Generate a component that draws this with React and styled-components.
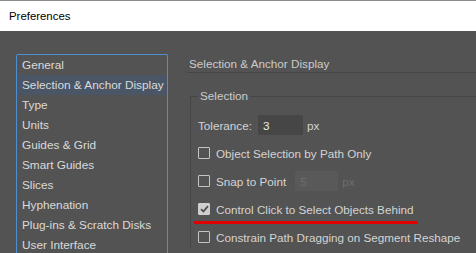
import React from "react";
import styled, { createGlobalStyle } from "styled-components";

const GlobalStyle = createGlobalStyle`
  html, body {
    margin: 0;
    padding: 0;
    background: #535353;
    overflow: hidden;
  }
  body {
    font-family: "Liberation Sans", Arial, sans-serif;
  }
`;

const Window = styled.div`
  width: 476px;
  height: 253px;
  display: flex;
  flex-direction: column;
  overflow: hidden;
`;

const TitleBar = styled.div`
  height: 30px;
  flex: none;
  background: #ffffff;
  border-top: 1px solid #8c8c8c;
  display: flex;
  align-items: center;
  padding-left: 9px;
  font-size: 11.4px;
  color: #000;
`;

const Body = styled.div`
  flex: 1;
  display: flex;
  padding: 23px 0 0 16px;
  background: #535353;
`;

const List = styled.ul`
  list-style: none;
  margin: 0;
  padding: 0;
  width: 150px;
  flex: none;
  border: 1px solid #4e8fcf;
  border-bottom: none;
  border-radius: 2px 2px 0 0;
`;

const Item = styled.li`
  height: 20px;
  line-height: 20px;
  padding-left: 5px;
  font-size: 11.8px;
  color: #dadada;
  white-space: nowrap;
  background: ${(p) => (p.$active ? "#4a5666" : "transparent")};
`;

const Panel = styled.div`
  flex: 1;
  margin-left: 19px;
  min-width: 0;
`;

const Heading = styled.div`
  height: 18px;
  line-height: 19px;
  padding-left: 2px;
  font-size: 11.7px;
  color: #cbcbcb;
  border-bottom: 1px solid #464646;
`;

const Group = styled.fieldset`
  margin: 15px 0 0 3px;
  padding: 10px 0 0 7px;
  border: none;
  border-top: 1px solid #464646;
  border-left: 1px solid #464646;
  display: flex;
  flex-direction: column;
  gap: 6px;
`;

const Legend = styled.legend`
  padding: 0 2px;
  font-size: 11.7px;
  line-height: 16px;
  color: #cbcbcb;
`;

const Row = styled.div`
  position: relative;
  height: 22px;
  display: flex;
  align-items: center;
  font-size: 11.7px;
  color: #d4d4d4;
  white-space: nowrap;

  ${(p) =>
    p.$marked &&
    `
    &::after {
      content: "";
      position: absolute;
      left: -4px;
      top: 23px;
      width: 224px;
      height: 3px;
      border-radius: 1px;
      background: #e00000;
    }
  `}
`;

const Box = styled.span`
  width: 10px;
  height: 10px;
  flex: none;
  margin-right: 6px;
  border: 1px solid ${(p) => (p.$checked ? "#cfcfcf" : "#c4c4c4")};
  background: ${(p) => (p.$checked ? "#cfcfcf" : "transparent")};
  border-radius: 1px;
  display: flex;
  align-items: center;
  justify-content: center;
`;

const Field = styled.span`
  width: ${(p) => p.$w || 45}px;
  height: 20px;
  box-sizing: border-box;
  margin-left: ${(p) => p.$gap || 6}px;
  margin-right: 4px;
  padding-left: 5px;
  border-radius: 2px;
  display: flex;
  align-items: center;
  background: ${(p) => (p.$disabled ? "#595959" : "#464646")};
  color: ${(p) => (p.$disabled ? "#6e6e6e" : "#ececec")};
`;

const Unit = styled.span`
  color: ${(p) => (p.$disabled ? "#6e6e6e" : "#d4d4d4")};
`;

const items = [
  "General",
  "Selection & Anchor Display",
  "Type",
  "Units",
  "Guides & Grid",
  "Smart Guides",
  "Slices",
  "Hyphenation",
  "Plug-ins & Scratch Disks",
  "User Interface",
];

function Check({ checked }) {
  return (
    <Box $checked={checked}>
      {checked && (
        <svg width="9" height="8" viewBox="0 0 9 8">
          <path d="M1 4.2 L3.4 6.5 L8 1.2" fill="none" stroke="#4d4d4d" strokeWidth="1.8" />
        </svg>
      )}
    </Box>
  );
}

export default function App() {
  return (
    <Window>
      <GlobalStyle />
      <TitleBar>Preferences</TitleBar>
      <Body>
        <List>
          {items.map((t) => (
            <Item key={t} $active={t === "Selection & Anchor Display"}>
              {t}
            </Item>
          ))}
        </List>
        <Panel>
          <Heading>Selection &amp; Anchor Display</Heading>
          <Group>
            <Legend>Selection</Legend>
            <Row>
              Tolerance:
              <Field>3</Field>
              <Unit>px</Unit>
            </Row>
            <Row>
              <Check />
              Object Selection by Path Only
            </Row>
            <Row>
              <Check />
              Snap to Point
              <Field $disabled $w={43} $gap={9}>5</Field>
              <Unit $disabled>px</Unit>
            </Row>
            <Row $marked>
              <Check checked />
              Control Click to Select Objects Behind
            </Row>
            <Row>
              <Check />
              Constrain Path Dragging on Segment Reshape
            </Row>
          </Group>
        </Panel>
      </Body>
    </Window>
  );
}
